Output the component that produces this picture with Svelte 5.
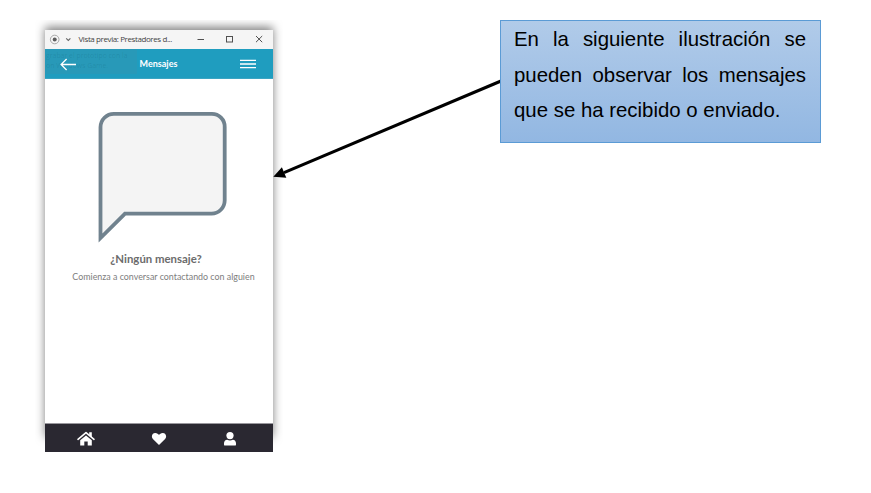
<script>
  const lines = [
    { text: 'En la siguiente ilustración se', justify: true },
    { text: 'pueden observar los mensajes', justify: true },
    { text: 'que se ha recibido o enviado.', justify: false }
  ];
</script>

<main class="page">
  <div class="frame">
    <section class="window">
      <div class="titlebar">
        <svg class="app-icon" width="24" height="12" viewBox="0 0 24 12" fill="none">
          <circle cx="5.7" cy="5.5" r="4.3" stroke="#959595" stroke-width=".8" />
          <circle cx="5.7" cy="5.5" r="2" fill="#5c5c5c" />
          <path d="M17.2 4.3 19.3 6.4l2.1-2.1" stroke="#666" stroke-width="1.1" />
        </svg>
        <span class="title">Vista previa: Prestadores d...</span>
        <svg class="controls" width="68" height="12" viewBox="0 0 68 12" fill="none" stroke="#505050" stroke-width="1">
          <path d="M.5 6.5h6.5" />
          <rect x="29.5" y="3.5" width="6" height="5.5" />
          <path d="m59 3 6.2 6.2m0-6.2-6.2 6.2" />
        </svg>
      </div>
      <header class="appbar">
        <div class="toast"><span>grabar el prototipo con la</span><span>on Windows Game.</span></div>
        <svg class="back" width="17" height="14" viewBox="0 0 17 14" fill="none" stroke="#fff" stroke-width="1.3">
          <path d="M16 7.5H1.2M6.6 2 1.1 7.5l5.5 5.5" />
        </svg>
        <h1>Mensajes</h1>
        <svg class="menu" width="16" height="10" viewBox="0 0 16 10" stroke="#fff" stroke-width="1.3">
          <path d="M0 1.3h16M0 5h16M0 8.7h16" />
        </svg>
      </header>
      <div class="content">
        <svg class="bubble" width="130" height="132" viewBox="0 0 130 132">
          <path d="M2.5 127V16.2A13.4 13.4 0 0 1 15.9 2.8h97.7A12.8 12.8 0 0 1 126.7 16v73.5a13.2 13.2 0 0 1-13.1 13.1H27Z" fill="#f4f4f4" stroke="#70828e" stroke-width="3.8" stroke-miterlimit="10" />
        </svg>
        <h2>¿Ningún mensaje?</h2>
        <p>Comienza a conversar contactando con alguien</p>
      </div>
      <nav>
        <svg width="18" height="16" viewBox="0 0 18 16">
          <path d="M1 8.3 9 1.6l8 6.7" fill="none" stroke="#fff" stroke-width="1.6" stroke-linecap="round" stroke-linejoin="round" />
          <path d="M12.2 1.2h2.6v5.2l-2.6-2.2ZM3.2 9.2 9 4.4l5.8 4.8v5.2h-4.1v-4H7.3v4H3.2Z" fill="#fff" />
        </svg>
        <svg width="16" height="14" viewBox="0 0 16 14">
          <path d="M8 13 1.9 7.1C-.1 5.2.9 1 4.3 1 6.1 1 7.3 2.1 8 3.1 8.7 2.1 9.9 1 11.7 1c3.4 0 4.4 4.2 2.4 6.1Z" fill="#fff" />
        </svg>
        <svg width="14" height="16" viewBox="0 0 14 16" fill="#fff">
          <circle cx="7" cy="4.6" r="3.6" />
          <path d="M1 13.4v-1.1C1 10.3 2.3 9 4.2 8.8c1.8.9 3.8.9 5.6 0 1.9.2 3.2 1.5 3.2 3.5v1.1c0 .8-.5 1.2-1.2 1.2H2.2C1.5 14.6 1 14.2 1 13.4Z" />
        </svg>
      </nav>
    </section>
  </div>

  <svg class="arrow" width="240" height="110" viewBox="0 0 240 110">
    <path d="M238 6 21 97.6" stroke="#000" stroke-width="3" />
    <path d="m10.3 101.8 8.6-9.6 4.4 10.5Z" />
  </svg>

  <aside class="note">
    {#each lines as line}
      <div class="line" class:justify={line.justify}>{line.text}</div>
    {/each}
  </aside>
</main>

<style>
  :global(body) { background: #fff; }
  .page {
    position: relative;
    display: flex;
    align-items: flex-start;
    justify-content: space-between;
    box-sizing: border-box;
    width: 871px;
    height: 493px;
    padding: 20px 50px 0 35px;
    font-family: Lato, "Liberation Sans", sans-serif;
    overflow: hidden;
  }
  .frame { padding: 10px; height: 422px; clip-path: inset(0 0 10px 0); }
  .window {
    position: relative;
    display: flex;
    flex-direction: column;
    width: 228px;
    height: 422px;
    background: #fff;
  }
  .window::before {
    content: "";
    position: absolute;
    z-index: -1;
    inset: 0 0 12px;
    box-shadow: 0 -3px 9px rgba(0, 0, 0, .5);
  }
  .titlebar {
    display: flex;
    align-items: center;
    height: 19px;
    padding: 0 7px 0 4px;
    background: #f5f5f5;
  }
  .title {
    flex: 1;
    padding: 0 0 1px 5.5px;
    font: 8px/10px "Open Sans", sans-serif;
    letter-spacing: -.4px;
    color: #444;
    white-space: nowrap;
  }
  .controls { position: relative; left: -1.5px; top: -.5px; }
  .appbar {
    position: relative;
    display: grid;
    grid-template-columns: 17px 1fr 16px;
    align-items: center;
    box-sizing: border-box;
    height: 30px;
    padding: 0 17px 0 15px;
    background: #1f9dbf;
    border-bottom: 1px solid #3ba5c3;
  }
  .toast {
    position: absolute;
    left: 0;
    top: -3px;
    width: 92px;
    height: 28px;
    box-sizing: border-box;
    padding: 5px 0 0 1px;
    background: rgba(110, 130, 140, .12);
    clip-path: inset(3px 0 0 0);
    color: rgba(0, 60, 80, .14);
    font: 6.9px/10px "Open Sans", sans-serif;
    white-space: nowrap;
    overflow: hidden;
  }
  .toast span { display: block; }
  .back, .menu, h1 { position: relative; }
  .menu { top: .5px; }
  h1 { margin: 0; font-size: 9px; font-weight: 700; color: #fff; text-align: center; }
  .content {
    flex: 1;
    display: flex;
    flex-direction: column;
    align-items: center;
    padding-top: 32px;
    color: #707070;
  }
  .bubble { margin-left: 8px; }
  h2 { margin: 8px 0 0; padding-right: 6px; font-size: 11.4px; line-height: 16px; font-weight: 700; color: #6c6c6c; }
  p { margin: 3px 0 0; padding-left: 9px; font-size: 8.9px; line-height: 14px; white-space: nowrap; color: #7d7d7d; }
  nav {
    display: flex;
    align-items: center;
    justify-content: space-between;
    box-sizing: border-box;
    height: 29px;
    padding: 1px 36px 0 32px;
    background: #2a2831;
    border-top: 1px solid #99979d;
  }
  .arrow { position: absolute; left: 263px; top: 75px; }
  .note {
    position: relative;
    box-sizing: border-box;
    width: 321px;
    height: 123px;
    padding: 1px 14px 0 13px;
    border: 1px solid #5b9bd5;
    background: linear-gradient(#b1cbe9, #92b7e2);
    font: 20.4px/35.6px "Liberation Sans", Arial, sans-serif;
    color: #000;
  }
  .line { white-space: nowrap; }
  .justify { text-align: justify; text-align-last: justify; }
</style>
